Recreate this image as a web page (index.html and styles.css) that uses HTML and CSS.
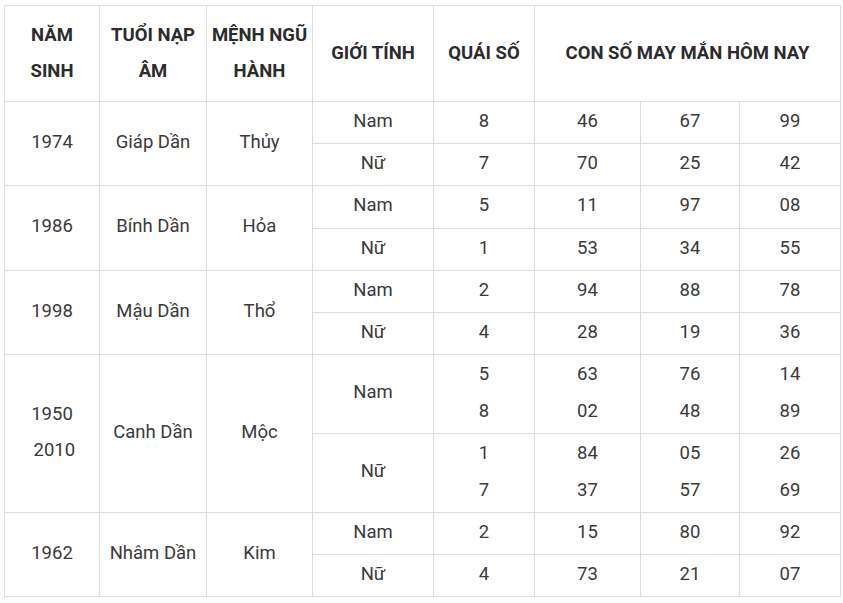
FILE: index.html
```html
<!DOCTYPE html>
<html lang="vi">
<head>
<meta charset="utf-8">
<title>Con số may mắn</title>
<link rel="stylesheet" href="styles.css">
</head>
<body>
<table class="lucky">
  <colgroup>
    <col class="c1"><col class="c2"><col class="c3"><col class="c4">
    <col class="c5"><col class="c6"><col class="c7"><col class="c8">
  </colgroup>
  <thead>
    <tr>
      <th>NĂM SINH</th>
      <th>TUỔI NẠP ÂM</th>
      <th>MỆNH NGŨ HÀNH</th>
      <th>GIỚI TÍNH</th>
      <th>QUÁI SỐ</th>
      <th colspan="3">CON SỐ MAY MẮN HÔM NAY</th>
    </tr>
  </thead>
  <tbody>
    <tr><td rowspan="2">1974</td><td rowspan="2">Giáp Dần</td><td rowspan="2">Thủy</td><td>Nam</td><td>8</td><td>46</td><td>67</td><td>99</td></tr>
    <tr><td>Nữ</td><td>7</td><td>70</td><td>25</td><td>42</td></tr>
    <tr><td rowspan="2">1986</td><td rowspan="2">Bính Dần</td><td rowspan="2">Hỏa</td><td>Nam</td><td>5</td><td>11</td><td>97</td><td>08</td></tr>
    <tr><td>Nữ</td><td>1</td><td>53</td><td>34</td><td>55</td></tr>
    <tr><td rowspan="2">1998</td><td rowspan="2">Mậu Dần</td><td rowspan="2">Thổ</td><td>Nam</td><td>2</td><td>94</td><td>88</td><td>78</td></tr>
    <tr><td>Nữ</td><td>4</td><td>28</td><td>19</td><td>36</td></tr>
    <tr><td rowspan="2">1950<br>&nbsp;2010</td><td rowspan="2">Canh Dần</td><td rowspan="2">Mộc</td><td>Nam</td><td>5<br>8</td><td>63<br>02</td><td>76<br>48</td><td>14<br>89</td></tr>
    <tr><td>Nữ</td><td>1<br>7</td><td>84<br>37</td><td>05<br>57</td><td>26<br>69</td></tr>
    <tr><td rowspan="2">1962</td><td rowspan="2">Nhâm Dần</td><td rowspan="2">Kim</td><td>Nam</td><td>2</td><td>15</td><td>80</td><td>92</td></tr>
    <tr><td>Nữ</td><td>4</td><td>73</td><td>21</td><td>07</td></tr>
  </tbody>
</table>
</body>
</html>
```

FILE: styles.css
```css
html, body {
  margin: 0;
  background: #ffffff;
}

body {
  padding: 5px 3px 0 4px;
  font-family: Roboto, "Liberation Sans", Arial, sans-serif;
  font-size: 18.5px;
  color: #3a3a3a;
}

.lucky {
  border-collapse: collapse;
  table-layout: fixed;
  width: 836px;
}

.c1 { width: 95px; }
.c2 { width: 107px; }
.c3 { width: 106px; }
.c4 { width: 121px; }
.c5 { width: 101px; }
.c6 { width: 106px; }
.c7 { width: 99px; }
.c8 { width: 101px; }

.lucky th,
.lucky td {
  border: 1px solid #dddddd;
  text-align: center;
  vertical-align: middle;
  line-height: 36.8px;
}

.lucky th {
  font-weight: 700;
  color: #2b2b2b;
  padding: 10.7px 4px 10.7px;
}

.lucky td {
  font-weight: 400;
  padding: 1px 6px 3.4px;
}
```
